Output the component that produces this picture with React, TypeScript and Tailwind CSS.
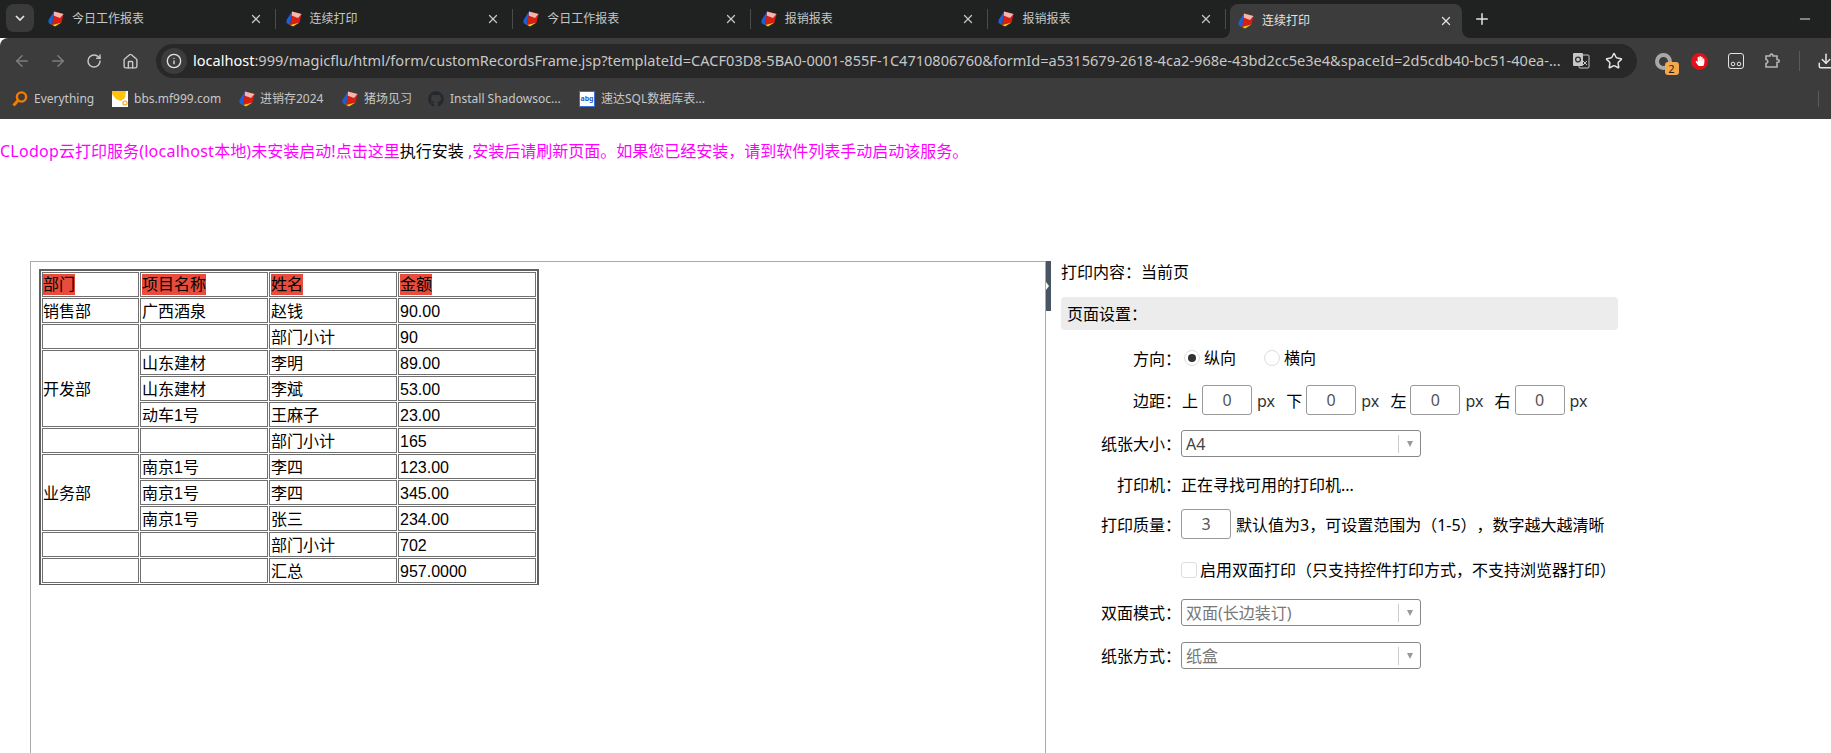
import React from "react";
import { ArrowLeft, ArrowRight, RotateCw, Home, X, Plus, Minus, Info, Star, Download } from "lucide-react";
import { FaGithub, FaHandPaper } from "react-icons/fa";

function Cube() {
  return (
    <svg viewBox="0 0 16 16" className="h-4 w-4 shrink-0">
      <path d="M6 0.5 L15.5 3 L13.5 11.5 L4 14 Z" fill="#d81e12" />
      <path d="M6 0.5 L15.5 3 L12 7 L5.5 4.5 Z" fill="#f3b6ac" />
      <path d="M6 0.5 L0.5 9 L0.5 12 L4 14 Z" fill="#1d5fd6" />
      <path d="M0.5 12 L4 14 L13.5 11.5 L7 15.5 Z" fill="#f5c518" />
    </svg>
  );
}

const tabs = ["今日工作报表", "连续打印", "今日工作报表", "报销报表", "报销报表"];

function Tab({ title }: { title: string }) {
  return (
    <div className="relative flex h-[38px] w-[237.6px] shrink-0 items-center pl-[10px]">
      <Cube />
      <span className="ml-2 flex-1 text-xs text-[#c4c7c5]">{title}</span>
      <X size={14} strokeWidth={2.2} className="mr-[12px] text-[#c4c7c5]" />
      <div className="h-5 w-px bg-[#4a4c4c]" />
    </div>
  );
}

function Sel({ text, dark }: { text: string; dark?: boolean }) {
  return (
    <div className="flex h-[27px] w-[240px] items-center rounded-[3px] border border-[#888888] bg-white pl-1">
      <span className={`flex-1 pt-px text-base ${dark ? "text-[#444444]" : "text-[#777777]"}`}>{text}</span>
      <div className="h-[18px] w-px bg-[#cccccc]" />
      <div className="ml-[8px] mr-[7px] h-0 w-0 border-x-[3.5px] border-t-[6px] border-x-transparent border-t-[#999999]" />
    </div>
  );
}

function Label({ text }: { text: string }) {
  return <div className="w-[120px] shrink-0 pt-px text-right text-base">{text}</div>;
}

function Num({ v }: { v: string }) {
  return (
    <input
      readOnly
      value={v}
      className="h-[30px] w-[50px] rounded-[3px] border border-[#999999] bg-white text-center text-base text-[#555555] outline-none"
    />
  );
}

function Margin({ side }: { side: string }) {
  return (
    <div className="flex w-[104.2px] shrink-0 items-center text-base">
      <span className="w-4 pt-px">{side}</span>
      <span className="ml-1">
        <Num v="0" />
      </span>
      <span className="ml-[5px] pt-px text-[#333333]">px</span>
    </div>
  );
}

const rows: [string | null, string, string, string, number?][] = [
  ["销售部", "广西酒泉", "赵钱", "90.00"],
  ["", "", "部门小计", "90"],
  ["开发部", "山东建材", "李明", "89.00", 3],
  [null, "山东建材", "李斌", "53.00"],
  [null, "动车1号", "王麻子", "23.00"],
  ["", "", "部门小计", "165"],
  ["业务部", "南京1号", "李四", "123.00", 3],
  [null, "南京1号", "李四", "345.00"],
  [null, "南京1号", "张三", "234.00"],
  ["", "", "部门小计", "702"],
  ["", "", "汇总", "957.0000"],
];

const head = "h-[25px] border border-[#707070] p-0 pl-px text-left align-middle leading-[21px]";
const firstHead = "h-[25px] border border-[#707070] p-0 text-left align-middle leading-[21px]";
const cell = "h-[25px] border border-[#707070] pb-0 pl-px pr-0 pt-px text-left align-middle leading-[21px]";
const firstCell = "h-[25px] border border-[#707070] pb-0 pl-0 pr-0 pt-px text-left align-middle leading-[21px]";
const btn = "flex h-[34px] w-9 shrink-0 items-center justify-center";
const ext = "flex h-[34px] w-[36.5px] shrink-0 items-center justify-center";

export default function App() {
  return (
    <div className="flex h-[753px] w-[1831px] flex-col overflow-hidden bg-white font-['Noto_Sans','Noto_Sans_CJK_SC',sans-serif]">
      {/* tab strip */}
      <div className="flex h-[38px] shrink-0 items-start bg-[#202222]">
        <div className="ml-[6px] mt-1 flex h-7 w-7 shrink-0 items-center justify-center rounded-lg bg-[#3a3a3a]">
          <svg viewBox="0 0 10 6" className="h-[6px] w-[10px]">
            <path d="M1 1 L5 5 L9 1" fill="none" stroke="#e3e3e3" strokeWidth="1.7" />
          </svg>
        </div>
        <div className="ml-1 flex shrink-0">
          {tabs.map((t, i) => (
            <Tab key={i} title={t} />
          ))}
        </div>
        <div className="relative ml-[4px] mt-1 flex h-[34px] w-[232px] shrink-0 items-center rounded-t-lg bg-[#3c3c3c] pl-2">
          <Cube />
          <span className="ml-2 flex-1 text-xs text-[#e3e3e3]">连续打印</span>
          <X size={14} strokeWidth={2.2} className="mr-[9px] text-[#e3e3e3]" />
          <div className="absolute -right-2 bottom-0 h-2 w-2 bg-[#3c3c3c]">
            <div className="h-2 w-2 rounded-bl-lg bg-[#202222]" />
          </div>
          <div className="absolute -left-2 bottom-0 h-2 w-2 bg-[#3c3c3c]">
            <div className="h-2 w-2 rounded-br-lg bg-[#202222]" />
          </div>
        </div>
        <Plus size={18} strokeWidth={2} className="ml-[11px] mt-[10px] shrink-0 text-[#e3e3e3]" />
        <Minus size={16} strokeWidth={1.5} className="ml-[306px] mt-[11px] shrink-0 text-[#e3e3e3]" />
      </div>

      {/* toolbar */}
      <div className="flex h-[40px] shrink-0 items-start overflow-hidden rounded-tl-lg bg-[#3c3c3c] pl-1 pt-[6px]">
        <div className={btn}>
          <ArrowLeft size={18} className="text-[#7d7d7d]" />
        </div>
        <div className={btn}>
          <ArrowRight size={18} className="text-[#7d7d7d]" />
        </div>
        <div className={btn}>
          <RotateCw size={16} strokeWidth={2.2} className="text-[#c7c7c7]" />
        </div>
        <div className={btn}>
          <Home size={17} strokeWidth={2} className="text-[#c7c7c7]" />
        </div>
        <div className="ml-2 flex h-[34px] w-[1481px] shrink-0 items-center rounded-full bg-[#282828]">
          <div className="ml-[5px] flex h-[26px] w-[26px] shrink-0 items-center justify-center rounded-full bg-[#3c3c3c]">
            <Info size={16} strokeWidth={2} className="text-[#e3e3e3]" />
          </div>
          <div className="ml-[6px] min-w-0 flex-1 overflow-hidden whitespace-nowrap text-[14.55px] text-[#c7c7c7]">
            <span className="text-white">localhost</span>:999/magicflu/html/form/customRecordsFrame.jsp?templateId=CACF03D8-5BA0-0001-855F-1C4710806760&amp;formId=a5315679-2618-4ca2-968e-43bd2cc5e3e4&amp;spaceId=2d5cdb40-bc51-40ea-...
          </div>
          <svg viewBox="0 0 18 18" className="ml-[9px] h-[18px] w-[18px] shrink-0">
            <rect x="7" y="3" width="10" height="13" rx="1" fill="#282828" stroke="#c7c7c7" strokeWidth="1" />
            <rect x="1" y="1" width="10" height="13" rx="1" fill="#c7c7c7" />
            <circle cx="6" cy="7.5" r="2.4" fill="none" stroke="#333333" strokeWidth="1.3" />
            <path d="M11 9 L15 13 M15 9 L11 13" stroke="#c7c7c7" strokeWidth="1" />
          </svg>
          <Star size={18} strokeWidth={2} className="ml-[15px] mr-[14px] shrink-0 text-[#e3e3e3]" />
        </div>
        <div className={`relative ml-[8px] ${ext}`}>
          <div className="h-[17px] w-[17px] rounded-full border-[4px] border-[#a8a8a8]" />
          <div className="absolute bottom-[3px] right-[3px] flex h-[13px] w-[14px] items-center justify-center rounded-[3px] bg-[#f3a94b] text-[11px] leading-none text-[#222222]">
            2
          </div>
        </div>
        <div className={ext}>
          <div className="flex h-[17px] w-[17px] items-center justify-center rounded-full bg-[#e3101a]">
            <FaHandPaper size={10} className="text-white" />
          </div>
        </div>
        <div className={ext}>
          <svg viewBox="0 0 16 16" className="h-4 w-4">
            <rect x="0.5" y="0.5" width="15" height="15" rx="2.5" fill="none" stroke="#e3e3e3" />
            <circle cx="5" cy="11" r="1.8" fill="none" stroke="#e3e3e3" />
            <circle cx="11" cy="11" r="1.8" fill="none" stroke="#e3e3e3" />
          </svg>
        </div>
        <div className={ext}>
          <svg viewBox="0 0 16 16" className="h-4 w-4">
            <path
              d="M1 3 H5 C5 0.5 8 0.5 8 3 H12 V6.5 C15 6.5 15 9.5 12 9.5 V14 H1 V10.5 C3.5 10 3.5 7 1 6.5 Z"
              fill="none"
              stroke="#b5b5b5"
              strokeWidth="1.6"
            />
          </svg>
        </div>
        <div className="ml-2 mt-[7px] h-5 w-px shrink-0 bg-[#5a5a5a]" />
        <Download size={18} strokeWidth={2} className="ml-[17px] mt-[8px] shrink-0 text-[#e3e3e3]" />
      </div>

      {/* bookmarks */}
      <div className="flex h-[41px] shrink-0 items-center bg-[#3c3c3c] text-xs text-[#c7c7c7]">
        <svg viewBox="0 0 16 16" className="ml-3 h-4 w-4 shrink-0">
          <circle cx="9.5" cy="6" r="4.6" fill="none" stroke="#f57c00" strokeWidth="2.4" />
          <path d="M6 9.5 L1.5 14.5" stroke="#f57c00" strokeWidth="3" />
        </svg>
        <span className="ml-[6px] w-[60px] shrink-0">Everything</span>
        <svg viewBox="0 0 16 16" className="ml-[18px] h-4 w-4 shrink-0">
          <rect width="16" height="16" fill="#ffffff" />
          <path d="M0 0 H14 L13 7 L9 10 L4 8 L0 3 Z" fill="#ffc20e" />
          <circle cx="13" cy="12" r="2" fill="none" stroke="#f5a623" strokeWidth="1.2" />
        </svg>
        <span className="ml-[6px] w-[88px] shrink-0">bbs.mf999.com</span>
        <span className="ml-[17px]">
          <Cube />
        </span>
        <span className="ml-[5px] w-[65px] shrink-0">进销存2024</span>
        <span className="ml-[17px]">
          <Cube />
        </span>
        <span className="ml-[6px] w-[48px] shrink-0">猪场见习</span>
        <FaGithub size={16} className="ml-[16px] shrink-0 text-[#24292f]" />
        <span className="ml-[6px] w-[112px] shrink-0 whitespace-nowrap">Install Shadowsoc...</span>
        <div className="ml-[17px] flex h-4 w-4 shrink-0 items-center justify-center border border-[#3b6fd8] bg-white text-[7px] leading-none font-bold text-[#2a5bd0]">
          abg
        </div>
        <span className="ml-[6px] w-[105px] shrink-0 whitespace-nowrap">速达SQL数据库表...</span>
        <div className="ml-[1112px] h-4 w-px shrink-0 bg-[#5a5a5a]" />
      </div>

      {/* notice */}
      <div className="h-[142px] shrink-0 pt-[20px] text-base leading-6 text-[#ff00ff]">
        <span className="tracking-[0.26px]">CLodop</span>云打印服务<span className="tracking-[0.26px]">(localhost</span>本地<span className="tracking-[0.26px]">)</span>未安装启动<span className="tracking-[0.26px]">!</span>点击这里<span className="text-black">执行安装</span> ,安装后请刷新页面。如果您已经安装，请到软件列表手动启动该服务。
      </div>

      {/* main */}
      <div className="flex min-h-0 flex-1 pl-[30px]">
        <div className="relative w-[1016px] shrink-0 border-x border-t border-[#aaaaaa] pl-[8px] pt-[7px]">
          <table className="w-[499.5px] table-fixed border-separate border-spacing-[1px] border-x-2 border-t-2 border-b border-[#606060] font-['Liberation_Sans','Noto_Sans_CJK_SC',sans-serif] text-base text-black">
            <colgroup>
              <col className="w-[97px]" />
              <col className="w-[128px]" />
              <col className="w-[128px]" />
              <col className="w-[137.5px]" />
            </colgroup>
            <tbody>
              <tr>
                {["部门", "项目名称", "姓名", "金额"].map((h, i) => (
                  <td key={h} className={i === 0 ? firstHead : head}>
                    <span className="inline-block bg-[#e74c3c] leading-[21px]">{h}</span>
                  </td>
                ))}
              </tr>
              {rows.map((r, i) => (
                <tr key={i}>
                  {r[0] !== null && (
                    <td className={firstCell} rowSpan={r[4] ?? 1}>
                      {r[0]}
                    </td>
                  )}
                  <td className={cell}>{r[1]}</td>
                  <td className={cell}>{r[2]}</td>
                  <td className={cell}>{r[3]}</td>
                </tr>
              ))}
            </tbody>
          </table>
          <div className="absolute -right-[6px] -top-px flex h-[50px] w-[5px] items-center bg-[#4a5563]">
            <div className="h-0 w-0 border-y-[4px] border-l-[3px] border-y-transparent border-l-white" />
          </div>
        </div>

        <div className="w-[572px] shrink-0 pl-[15px] text-black">
          <div className="h-6 text-base leading-[22px]">打印内容：当前页</div>
          <div className="mt-3 flex h-[33px] items-center rounded bg-[#ececec] pl-[6px] text-base">页面设置：</div>

          <div className="mt-4 flex h-6 items-center">
            <Label text="方向：" />
            <div className="ml-[3px] flex h-4 w-4 items-center justify-center rounded-full border border-[#dddddd]">
              <div className="h-2 w-2 rounded-full bg-[#333333]" />
            </div>
            <span className="ml-1 w-[60px] text-base">纵向</span>
            <div className="h-4 w-4 rounded-full border border-[#dddddd]" />
            <span className="ml-1 text-base">横向</span>
          </div>

          <div className="mt-[15px] flex h-[30px] items-center">
            <Label text="边距：" />
            <div className="ml-px flex">
              <Margin side="上" />
              <Margin side="下" />
              <Margin side="左" />
              <Margin side="右" />
            </div>
          </div>

          <div className="mt-[15px] flex h-[27px] items-center">
            <Label text="纸张大小：" />
            <Sel text="A4" dark />
          </div>

          <div className="mt-[15px] flex h-6 items-center text-base">
            <Label text="打印机：" />
            <span className="pt-px">正在寻找可用的打印机...</span>
          </div>

          <div className="mt-[13px] flex h-[30px] items-center">
            <Label text="打印质量：" />
            <Num v="3" />
            <span className="ml-[5px] whitespace-nowrap pt-px text-base [text-spacing-trim:space-all]">默认值为3，可设置范围为（1-5），数字越大越清晰</span>
          </div>

          <div className="mt-[19px] flex h-6 items-center pl-[120px]">
            <div className="h-4 w-4 shrink-0 rounded-[3px] border border-[#dddddd]" />
            <span className="ml-[3px] whitespace-nowrap text-base [text-spacing-trim:space-all]">启用双面打印（只支持控件打印方式，不支持浏览器打印）</span>
          </div>

          <div className="mt-[17px] flex h-[27px] items-center">
            <Label text="双面模式：" />
            <Sel text="双面(长边装订)" />
          </div>

          <div className="mt-4 flex h-[27px] items-center">
            <Label text="纸张方式：" />
            <Sel text="纸盒" />
          </div>
        </div>
      </div>
    </div>
  );
}
